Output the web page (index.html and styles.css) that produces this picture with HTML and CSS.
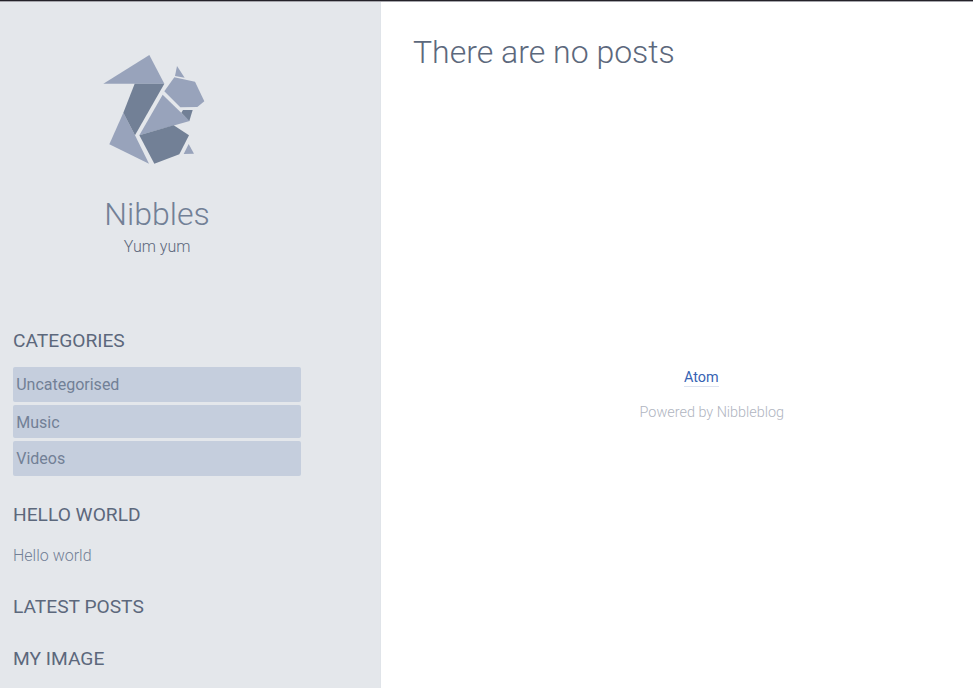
FILE: index.html
```html
<!DOCTYPE html>
<html lang="en">
<head>
<meta charset="utf-8">
<title>Nibbles</title>
<link rel="stylesheet" href="styles.css">
</head>
<body>
<div class="page">
  <aside class="sidebar">
    <header class="brand">
      <svg class="logo" viewBox="0 0 360 390" aria-hidden="true">
        <g fill="#98a3bb">
          <path d="M25 116L163 30L208 116Z"/>
          <path d="M85 203L43 298L162 356L120 271Z"/>
          <path d="M203 149L133 271L284 228Z"/>
          <path d="M238 97L208 139L256 187L307 186L328 169L300 110Z"/>
          <path d="M246 63L240 93L269 98Z"/>
          <path d="M281 297L266 327L297 326Z"/>
        </g>
        <g fill="#728096">
          <path d="M119 116H208L120 271L85 203Z"/>
          <path d="M133 271L236 241L282 271L253 328L178 356Z"/>
          <path d="M264 195H293L283 228L259 203Z"/>
        </g>
      </svg>
      <h1 class="name">Nibbles</h1>
      <p class="slogan">Yum yum</p>
    </header>
    <section class="widget">
      <h2 class="heading">Categories</h2>
      <ul class="list">
        <li class="item">Uncategorised</li>
        <li class="item compact">Music</li>
        <li class="item">Videos</li>
      </ul>
    </section>
    <section class="widget hello">
      <h2 class="heading">Hello world</h2>
      <p class="text">Hello world</p>
    </section>
    <section class="widget latest">
      <h2 class="heading">Latest posts</h2>
    </section>
    <section class="widget image">
      <h2 class="heading">My image</h2>
    </section>
  </aside>
  <main class="content">
    <h2 class="empty">There are no posts</h2>
    <footer class="footer">
      <a class="feed">Atom</a>
      <p class="powered">Powered by Nibbleblog</p>
    </footer>
  </main>
</div>
</body>
</html>
```
FILE: styles.css
```css
* { box-sizing: border-box; }
h1, h2, p, ul { margin: 0; padding: 0; font-weight: 300; }
body {
  margin: 0;
  background: #fff;
  font-family: Roboto, "Liberation Sans", sans-serif;
  font-size: 16px;
  font-weight: 300;
  color: #5c687c;
}
.page {
  display: flex;
  height: 688px;
  overflow: hidden;
  border-top: 1px solid #242229;
  box-shadow: inset 0 1px #a5a5ab;
}
.sidebar {
  flex: none;
  width: 381px;
  padding: 0 79px 0 13px;
  margin-top: 1px;
  background: #e4e7eb;
  border-right: 1px solid #e0e4e9;
}
.brand {
  display: flex;
  flex-direction: column;
  align-items: center;
  padding-top: 43px;
  height: 326px;
}
.logo { width: 120px; height: 130px; margin-right: 4px; flex: none; }
.name {
  margin-top: 19px;
  font-size: 32px;
  line-height: 40px;
  color: #728096;
}
.slogan { margin-top: 1px; line-height: 24px; }
.heading {
  font-size: 19.2px;
  line-height: 26px;
  font-weight: 400;
  text-transform: uppercase;
}
.list { margin-top: 13px; list-style: none; }
.item {
  height: 35px;
  margin-bottom: 3px;
  padding-left: 3.2px;
  border-radius: 2px;
  background: #c5cedd;
  color: #728096;
  font-weight: 400;
  line-height: 35px;
}
.compact { height: 33px; }
.hello { margin-top: 26px; }
.text { margin-top: 16px; line-height: 24px; color: #728096; }
.latest { margin-top: 26px; }
.image { margin-top: 26px; }
.content { flex: 1; padding: 31px 0 0 32px; }
.empty { font-size: 32px; line-height: 40px; }
.footer {
  width: 558px;
  margin-top: 296px;
  font-size: 14.4px;
}
.feed {
  display: block;
  width: max-content;
  margin-left: 271px;
  height: 19px;
  line-height: 20px;
  font-weight: 400;
  color: #3663b3;
  border-bottom: 1px solid #dde3ef;
}
.powered { margin: 16px 0 0 226.6px; line-height: 20px; color: #b0b5bf; }
```
